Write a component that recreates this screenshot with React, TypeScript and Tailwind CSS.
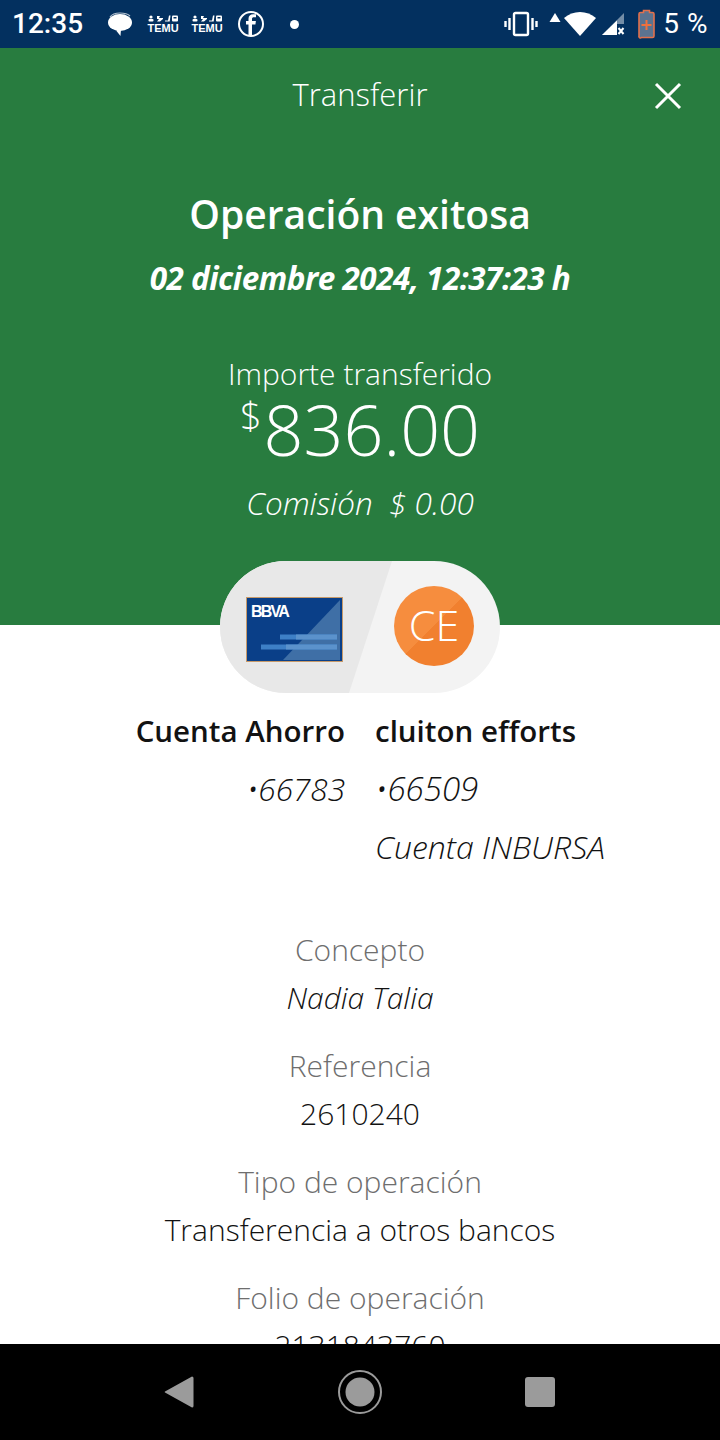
const sans = "font-['Open_Sans','Liberation_Sans',sans-serif]";

function TemuIcon() {
  return (
    <div className="flex w-[30px] flex-col items-center leading-none">
      <svg width="30" height="7" viewBox="0 0 30 7" fill="white">
        <circle cx="3" cy="2" r="1.6" />
        <rect x="0.5" y="4" width="5" height="2.5" rx="1" />
        <path d="M9 1h3l-1 2h4v1l-3 2.5h-3l2-2.500H9z" />
        <path d="M17 5.500h3l1-5h1.500l-.8 6H17z" />
        <rect x="24" y="0.500" width="6" height="6" rx="1" />
        <rect x="25.500" y="2" width="3" height="1.500" fill="#03305f" />
      </svg>
      <span className="mt-[1px] font-['Liberation_Sans',sans-serif] text-[11px] font-bold leading-[11px] text-white">
        TEMU
      </span>
    </div>
  );
}

function StatusBar() {
  return (
    <div className="flex h-[48px] shrink-0 items-center bg-[#03305f] pl-[12px] pr-[12px] text-white">
      <span className="w-[95px] font-['Roboto',sans-serif] text-[28px] font-medium leading-none">12:35</span>
      <svg width="26" height="26" viewBox="0 0 26 26" className="mr-[15px] mt-[2px]" fill="white">
        <ellipse cx="13" cy="10.500" rx="12" ry="8.500" />
        <path d="M10 17l4 0 -0.5 7 -4-5z" />
        <path d="M3 5c2-3 6-4 10-4s8 1 10 3" fill="none" stroke="white" strokeOpacity=".7" strokeWidth="1.200" />
      </svg>
      <div className="mr-[14px]"><TemuIcon /></div>
      <TemuIcon />
      <svg width="28" height="28" viewBox="0 0 28 28" className="ml-[15px]" fill="none" stroke="white" strokeWidth="2">
        <circle cx="14" cy="14" r="12" />
        <path d="M15 25V14.500h3.400l.5-3.600H15V9c0-1.200.5-1.800 1.900-1.800H19V4.200h-2.800c-3 0-4.700 1.700-4.700 4.500v2.200H9v3.600h2.500V25z" fill="white" stroke="none" />
      </svg>
      <span className="ml-[25px] h-[9px] w-[9px] rounded-full bg-white" />
      <div className="flex-1" />
      <svg width="34" height="26" viewBox="0 0 34 26" fill="none" stroke="white" strokeWidth="2.400" className="mr-[11px]">
        <rect x="10" y="2" width="14" height="22" rx="1.500" />
        <path d="M5.500 7v12M1.500 10v6M28.500 7v12M32.500 10v6" />
      </svg>
      <svg width="12" height="9" viewBox="0 0 12 9" fill="white" className="mb-[14px] mr-[3px]">
        <path d="M6 0l5.500 9H.5z" />
      </svg>
      <svg width="32" height="26" viewBox="0 0 32 26" fill="white" className="mr-[5px]">
        <path d="M16 25L0 7c9-8 23-8 32 0z" />
      </svg>
      <svg width="24" height="24" viewBox="0 0 24 24" className="mr-[13px]">
        <path d="M23 1v11h-7v11H1z" fill="white" fillOpacity=".45" />
        <path d="M16 8.500V23H1z" fill="white" />
        <path d="M17.500 16l5 6M22.500 16l-5 6" stroke="white" strokeWidth="2" />
      </svg>
      <svg width="17" height="30" viewBox="0 0 17 30" fill="none" className="mr-[8px]">
        <path d="M5.500 1.500h6v2h3a1.500 1.500 0 0 1 1.500 1.500v22a1.500 1.500 0 0 1-1.500 1.500h-11A1.500 1.500 0 0 1 1 27V5a1.500 1.500 0 0 1 1.500-1.500h3z" fill="#5b7390" stroke="#e2704c" strokeWidth="1.600" />
        <path d="M8.500 11v10M3.500 16h10" stroke="#f0703c" strokeWidth="2" />
      </svg>
      <span className="font-['Roboto',sans-serif] text-[28px] font-normal leading-none tracking-[0.5px]">5 %</span>
    </div>
  );
}

function TransferPill() {
  return (
    <div className="relative z-10 mx-auto -mt-[64px] flex h-[132px] w-[280px] items-center overflow-hidden rounded-[66px] bg-[#f3f3f3]">
      <div className="absolute inset-0 bg-[#e8e8e8] [clip-path:polygon(0_0,172px_0,129px_100%,0_100%)]" />
      <svg width="97" height="65" viewBox="0 0 97 65" className="relative ml-[26px] mt-[4px]">
        <rect x="0.500" y="0.500" width="96" height="64" fill="#0a3f88" stroke="#c79a6a" strokeWidth="1" />
        <path d="M37 63L94 3v60z" fill="#3f6fa6" />
        <rect x="34" y="37.500" width="57" height="5" fill="#3d7fc6" />
        <rect x="15" y="47.500" width="76" height="5" fill="#3d7fc6" />
        <rect x="50" y="37.500" width="41" height="5" fill="#5b92cc" />
        <rect x="40" y="47.500" width="51" height="5" fill="#5b92cc" />
        <text x="5" y="20" fill="white" fontFamily="Liberation Sans, sans-serif" fontWeight="700" fontSize="16" letterSpacing="-1.800">BBVA</text>
      </svg>
      <div className="relative ml-[51px] mt-[-2px] flex h-[80px] w-[80px] items-center justify-center rounded-full bg-[linear-gradient(135deg,#f68d3e_50%,#f1802f_50%)] pb-[4px] text-[43px] font-light leading-none text-white">
        CE
      </div>
    </div>
  );
}

function Field({ label, value, italic }: { label: string; value: string; italic?: boolean }) {
  return (
    <div className="mb-[20px] text-center text-[30px] leading-[48px]">
      <p className="font-light text-[#6e6e6e]">{label}</p>
      <p className={`font-light text-[#121212] ${italic ? "italic" : ""}`}>{value}</p>
    </div>
  );
}

function NavBar() {
  return (
    <div className="flex h-[96px] shrink-0 items-center justify-center bg-black pr-[1px]">
      <svg width="30" height="34" viewBox="0 0 30 34" fill="#9b9b9b" className="mr-[144px]">
        <path d="M28 1.500a1.500 1.500 0 0 1 1.500 1.500v28a1.500 1.500 0 0 1-1.500 1.500L1 17.500a.6.6 0 0 1 0-1z" />
      </svg>
      <svg width="44" height="44" viewBox="0 0 44 44">
        <circle cx="22" cy="22" r="21" fill="none" stroke="#9b9b9b" strokeWidth="2" />
        <circle cx="22" cy="22" r="14.500" fill="#9b9b9b" />
      </svg>
      <div className="ml-[143px] h-[30px] w-[30px] rounded-[3px] bg-[#9b9b9b]" />
    </div>
  );
}

export default function App() {
  return (
    <div className={`flex h-[1440px] w-[720px] flex-col overflow-hidden bg-white ${sans}`}>
      <StatusBar />
      <div className="min-h-0 flex-1 overflow-hidden">
        <div className="h-[577px] bg-[#287c3f] text-center text-white">
          <div className="relative pt-[25px] text-[31px] font-light leading-[42px]">
            Transferir
            <svg width="28" height="28" viewBox="0 0 28 28" className="absolute right-[38px] top-[34px]" stroke="white" strokeWidth="3">
              <path d="M2 2l24 24M26 2L2 26" />
            </svg>
          </div>
          <h1 className="mt-[73px] text-[39px] font-semibold leading-[52px]">Operación exitosa</h1>
          <p className="mt-[18px] text-[31.500px] font-bold italic leading-[40px] tracking-[-0.5px]">02 diciembre 2024, 12:37:23 h</p>
          <p className="mt-[56px] text-[30px] font-light leading-[40px]">Importe transferido</p>
          <p className="-mt-[1px] text-[70px] font-light leading-[72px]">
            <span className="relative -top-[26px] mr-[2px] text-[38px]">$</span>836.00
          </p>
          <p className="mt-[6px] text-[31.500px] font-light italic leading-[40px]">Comisión&nbsp; $ 0.00</p>
        </div>
        <TransferPill />
        <div className="mt-[9px] grid grid-cols-2 gap-[30px] text-[29.500px] leading-[58px]">
          <div className="text-right">
            <p className="whitespace-nowrap font-semibold text-[#121212]">Cuenta Ahorro</p>
            <p className="text-[31.500px] font-light italic text-[#121212]">•66783</p>
          </div>
          <div className="text-left">
            <p className="whitespace-nowrap font-semibold text-[#121212]">cluiton efforts</p>
            <p className="text-[33px] font-light italic text-[#121212]">•66509</p>
            <p className="whitespace-nowrap text-[32px] font-light italic text-[#121212]">Cuenta INBURSA</p>
          </div>
        </div>
        <div className="mt-[50px]">
          <Field label="Concepto" value="Nadia Talia" italic />
          <Field label="Referencia" value="2610240" />
          <Field label="Tipo de operación" value="Transferencia a otros bancos" />
          <Field label="Folio de operación" value="2131843760" />
        </div>
      </div>
      <NavBar />
    </div>
  );
}
